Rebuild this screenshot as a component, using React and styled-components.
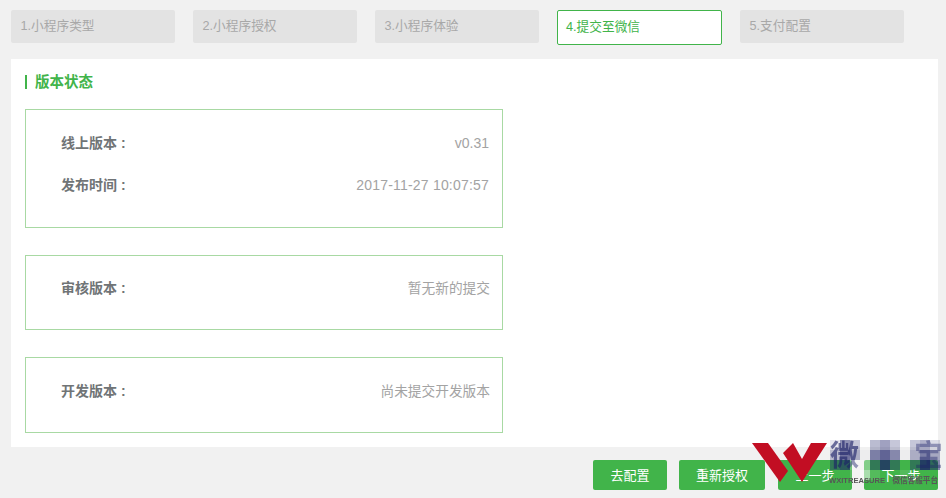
import React from "react";
import styled, { createGlobalStyle } from "styled-components";

const GREEN = "#41b44a";
const STACK = '"Liberation Sans", "Noto Sans CJK SC", sans-serif';

const Global = createGlobalStyle`
  html, body { margin: 0; padding: 0; background: #f1f1f1; overflow: hidden; }
  body { font-family: ${STACK}; font-size: 14px; }
`;

const Page = styled.div`
  position: relative;
  width: 946px;
  height: 498px;
  box-sizing: border-box;
  padding: 10px 8px 0 11px;
`;

const Steps = styled.div`
  display: flex;
  align-items: flex-start;
  gap: 18px;
  height: 49px;
`;

const Step = styled.div`
  box-sizing: border-box;
  width: ${(p) => (p.$active ? 165 : 164)}px;
  height: ${(p) => (p.$active ? 35 : 33)}px;
  padding-left: ${(p) => (p.$active ? 8 : 9.5)}px;
  line-height: 32px;
  font-size: 12.7px;
  border-radius: 2px;
  color: ${(p) => (p.$active ? GREEN : "#a8a8a8")};
  background: ${(p) => (p.$active ? "#fff" : "#e3e3e3")};
  border: ${(p) => (p.$active ? `1px solid ${GREEN}` : "none")};
`;

const Panel = styled.div`
  box-sizing: border-box;
  width: 927px;
  height: 388px;
  padding: 16px 14px 0;
  background: #fff;
`;

const Title = styled.h2`
  margin: 0 0 20px;
  height: 14px;
  padding-left: 8px;
  border-left: 2px solid ${GREEN};
  font-size: 14.5px;
  font-weight: 700;
  line-height: 14px;
  color: ${GREEN};
`;

const Card = styled.section`
  box-sizing: border-box;
  width: 478px;
  height: ${(p) => p.$h}px;
  margin-bottom: 27px;
  padding: ${(p) => p.$pt}px 13px 0 35px;
  border: 1px solid #a8d9a3;
`;

const Row = styled.div`
  display: flex;
  justify-content: space-between;
  align-items: center;
  height: 42px;
`;

const Label = styled.span`
  margin-bottom: 2px;
  font-weight: 700;
  color: #707476;
`;

const Colon = styled.span`
  margin-left: 4px;
`;

const Value = styled.span`
  color: #a3a3a3;
  font-size: ${(p) => (p.$kind === "cjk" ? 13.7 : 14)}px;
  letter-spacing: ${(p) => (p.$kind === "date" ? 0.2 : 0)}px;
  margin-bottom: ${(p) => (p.$kind === "cjk" ? 2 : 0)}px;
  margin-right: ${(p) => (p.$kind === "cjk" ? -1 : 0)}px;
`;

const Actions = styled.div`
  display: flex;
  justify-content: flex-end;
  gap: 12px;
  margin-top: 13px;
`;

const Button = styled.button`
  width: ${(p) => p.$w}px;
  height: 30px;
  margin-left: ${(p) => p.$ml || 0}px;
  padding: 0 0 2px;
  border: 0;
  border-radius: 2px;
  background: ${GREEN};
  color: #fff;
  font-family: ${STACK};
  font-size: 13px;
`;

const Watermark = styled.div`
  position: absolute;
  left: 752px;
  top: 440px;
  width: 190px;
  height: 46px;
  pointer-events: none;
`;

const Logo = styled.svg`
  position: absolute;
  left: 0;
  top: 3px;
`;

const Glyph = styled.span`
  position: absolute;
  top: 1px;
  left: ${(p) => p.$left}px;
  font-size: 29px;
  line-height: 30px;
  font-weight: 700;
  color: rgba(28, 32, 104, ${(p) => p.$alpha});
  filter: blur(0.7px);
`;

const Mosaic = styled.div`
  position: absolute;
  left: 78px;
  top: 0;
  display: grid;
  grid-template-columns: repeat(11, 10px);
  grid-auto-rows: 10px;
`;

const Cell = styled.i`
  display: block;
`;

const Caption = styled.span`
  position: absolute;
  left: 77px;
  top: 36px;
  width: 109px;
  display: flex;
  justify-content: space-between;
  font-size: 7.6px;
  line-height: 9px;
  font-weight: 700;
  color: #565656;
  white-space: nowrap;
  filter: blur(0.4px);
`;

const ALPHAS = [
  [0.1, 0.5, 0.25, 0, 0.3, 0.42, 0.25, 0, 0.25, 0.35, 0.15],
  [0.25, 0.6, 0.32, 0.02, 0.55, 0.68, 0.5, 0.02, 0.32, 0.55, 0.35],
  [0.4, 0.6, -0.25, -0.35, 0.4, 0.75, 0.4, 0, 0.4, 0.8, 0.5],
  [0, 0, -0.15, -0.55, -0.1, 0, 0, -0.1, 0, 0, 0],
];

const cellColor = (a) =>
  a < 0 ? `rgba(255,255,255,${-a})` : `rgba(28,32,104,${a})`;

const STEPS = ["1.小程序类型", "2.小程序授权", "3.小程序体验", "4.提交至微信", "5.支付配置"];

const CARDS = [
  {
    h: 119,
    pt: 12,
    rows: [
      ["线上版本", "v0.31", "latin"],
      ["发布时间", "2017-11-27 10:07:57", "date"],
    ],
  },
  { h: 75, pt: 11, rows: [["审核版本", "暂无新的提交", "cjk"]] },
  { h: 76, pt: 12, rows: [["开发版本", "尚未提交开发版本", "cjk"]] },
];

export default function App() {
  return (
    <Page>
      <Global />
      <Steps>
        {STEPS.map((s, i) => (
          <Step key={s} $active={i === 3}>
            {s}
          </Step>
        ))}
      </Steps>
      <Panel>
        <Title>版本状态</Title>
        {CARDS.map((c) => (
          <Card key={c.rows[0][0]} $h={c.h} $pt={c.pt}>
            {c.rows.map(([l, v, kind]) => (
              <Row key={l}>
                <Label>
                  {l}
                  <Colon>:</Colon>
                </Label>
                <Value $kind={kind}>{v}</Value>
              </Row>
            ))}
          </Card>
        ))}
      </Panel>
      <Actions>
        <Button $w={74}>去配置</Button>
        <Button $w={86}>重新授权</Button>
        <Button $w={74} $ml={1}>上一步</Button>
        <Button $w={74}>下一步</Button>
      </Actions>
      <Watermark>
        <Logo width="76" height="40" viewBox="0 0 76 40">
          <polygon fill="#c20e23" points="0,0 16,0 36,28 28,39" />
          <polygon fill="#c20e23" points="31,10 41,0 50,16 59,0 75,0 50,39" />
        </Logo>
        <Glyph $left={78} $alpha={0.62}>微</Glyph>
        <Glyph $left={162} $alpha={0.4}>宝</Glyph>
        <Mosaic>
          {ALPHAS.flat().map((a, i) => (
            <Cell key={i} style={{ background: cellColor(a) }} />
          ))}
        </Mosaic>
        <Caption>
          <span>WXITREASURE</span>
          <span>微信客服平台</span>
        </Caption>
      </Watermark>
    </Page>
  );
}
